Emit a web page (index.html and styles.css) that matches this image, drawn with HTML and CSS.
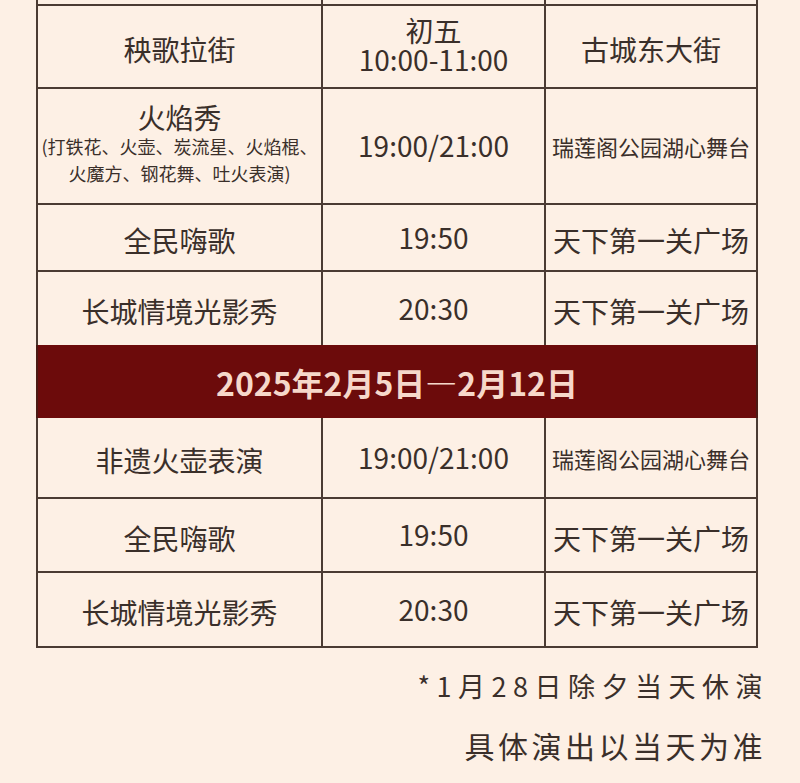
FILE: index.html
```html
<!DOCTYPE html>
<html lang="zh-CN">
<head>
<meta charset="utf-8">
<link rel="stylesheet" href="styles.css">
</head>
<body>
<div class="page">
  <div class="table">
    <div class="row r0"><div class="cell"></div><div class="cell"></div><div class="cell"></div></div>
    <div class="row r1">
      <div class="cell cjk">秧歌拉街</div>
      <div class="cell two"><span class="line">初五</span><span class="line">10:00-11:00</span></div>
      <div class="cell cjk">古城东大街</div>
    </div>
    <div class="row r2">
      <div class="cell stack">
        <span class="title">火焰秀</span>
        <span class="sub">(打铁花、火壶、炭流星、火焰棍、<br>火魔方、钢花舞、吐火表演)</span>
      </div>
      <div class="cell num">19:00/21:00</div>
      <div class="cell small">瑞莲阁公园湖心舞台</div>
    </div>
    <div class="row r3">
      <div class="cell cjk">全民嗨歌</div>
      <div class="cell num">19:50</div>
      <div class="cell cjk">天下第一关广场</div>
    </div>
    <div class="row r4">
      <div class="cell cjk">长城情境光影秀</div>
      <div class="cell num">20:30</div>
      <div class="cell cjk">天下第一关广场</div>
    </div>
    <div class="band">2025年2月5日—2月12日</div>
    <div class="row r5">
      <div class="cell cjk">非遗火壶表演</div>
      <div class="cell num">19:00/21:00</div>
      <div class="cell small">瑞莲阁公园湖心舞台</div>
    </div>
    <div class="row r6">
      <div class="cell cjk">全民嗨歌</div>
      <div class="cell num">19:50</div>
      <div class="cell cjk">天下第一关广场</div>
    </div>
    <div class="row r7">
      <div class="cell cjk">长城情境光影秀</div>
      <div class="cell num">20:30</div>
      <div class="cell cjk">天下第一关广场</div>
    </div>
  </div>
  <div class="notes">
    <p class="note1">*1月28日除夕当天休演</p>
    <p class="note2">具体演出以当天为准</p>
  </div>
</div>
</body>
</html>
```

FILE: styles.css
```css
html, body {
  margin: 0;
  padding: 0;
  background: #fdf0e5;
}
body {
  font-family: "Noto Sans CJK SC", "Noto Sans", sans-serif;
  color: #3a2f2a;
}
.page {
  width: 800px;
  height: 783px;
  overflow: hidden;
  background: #fdf0e5;
}
.table {
  margin-left: 36px;
  width: 722px;
}
.row {
  display: grid;
  grid-template-columns: 283px 223px 212px;
  border-left: 2px solid #4b3b33;
  border-right: 2px solid #4b3b33;
  border-bottom: 2px solid #4b3b33;
  box-sizing: border-box;
}
.cell {
  display: flex;
  align-items: center;
  justify-content: center;
  text-align: center;
  font-size: 28px;
  line-height: 32px;
  box-sizing: border-box;
}
.cell + .cell {
  border-left: 2px solid #4b3b33;
}
.cjk {
  padding-top: 5px;
}
.num {
  padding-bottom: 2px;
}
.r0 { height: 6px; }
.r1 { height: 83px; }
.r2 { height: 116px; }
.r3 { height: 67px; }
.r4 { height: 73px; border-bottom: none; }
.r5 { height: 81px; }
.r6 { height: 74px; }
.r7 { height: 75px; }
.two {
  flex-direction: column;
  padding-bottom: 3px;
}
.two .line {
  display: block;
  line-height: 29px;
}
.stack {
  flex-direction: column;
  padding-bottom: 4px;
}
.stack .title {
  display: block;
  font-size: 28px;
  line-height: 32px;
}
.stack .sub {
  display: block;
  font-size: 18px;
  line-height: 27px;
}
.small {
  font-size: 22px;
}
.band {
  height: 73px;
  background: #6c0b0b;
  color: #f6d8ca;
  font-weight: 700;
  font-size: 32px;
  display: flex;
  align-items: center;
  justify-content: center;
  border-left: 2px solid #4b1a14;
  border-right: 2px solid #4b1a14;
  box-sizing: border-box;
}
.notes {
  padding-right: 37px;
  text-align: right;
}
.note1 {
  margin: 23px 0 0 0;
  font-size: 27px;
  line-height: 30px;
  letter-spacing: 6.5px;
  margin-right: -6px;
}
.note2 {
  margin: 27px 0 0 0;
  font-size: 30px;
  line-height: 34px;
  letter-spacing: 3.5px;
  margin-right: -3px;
}
```
